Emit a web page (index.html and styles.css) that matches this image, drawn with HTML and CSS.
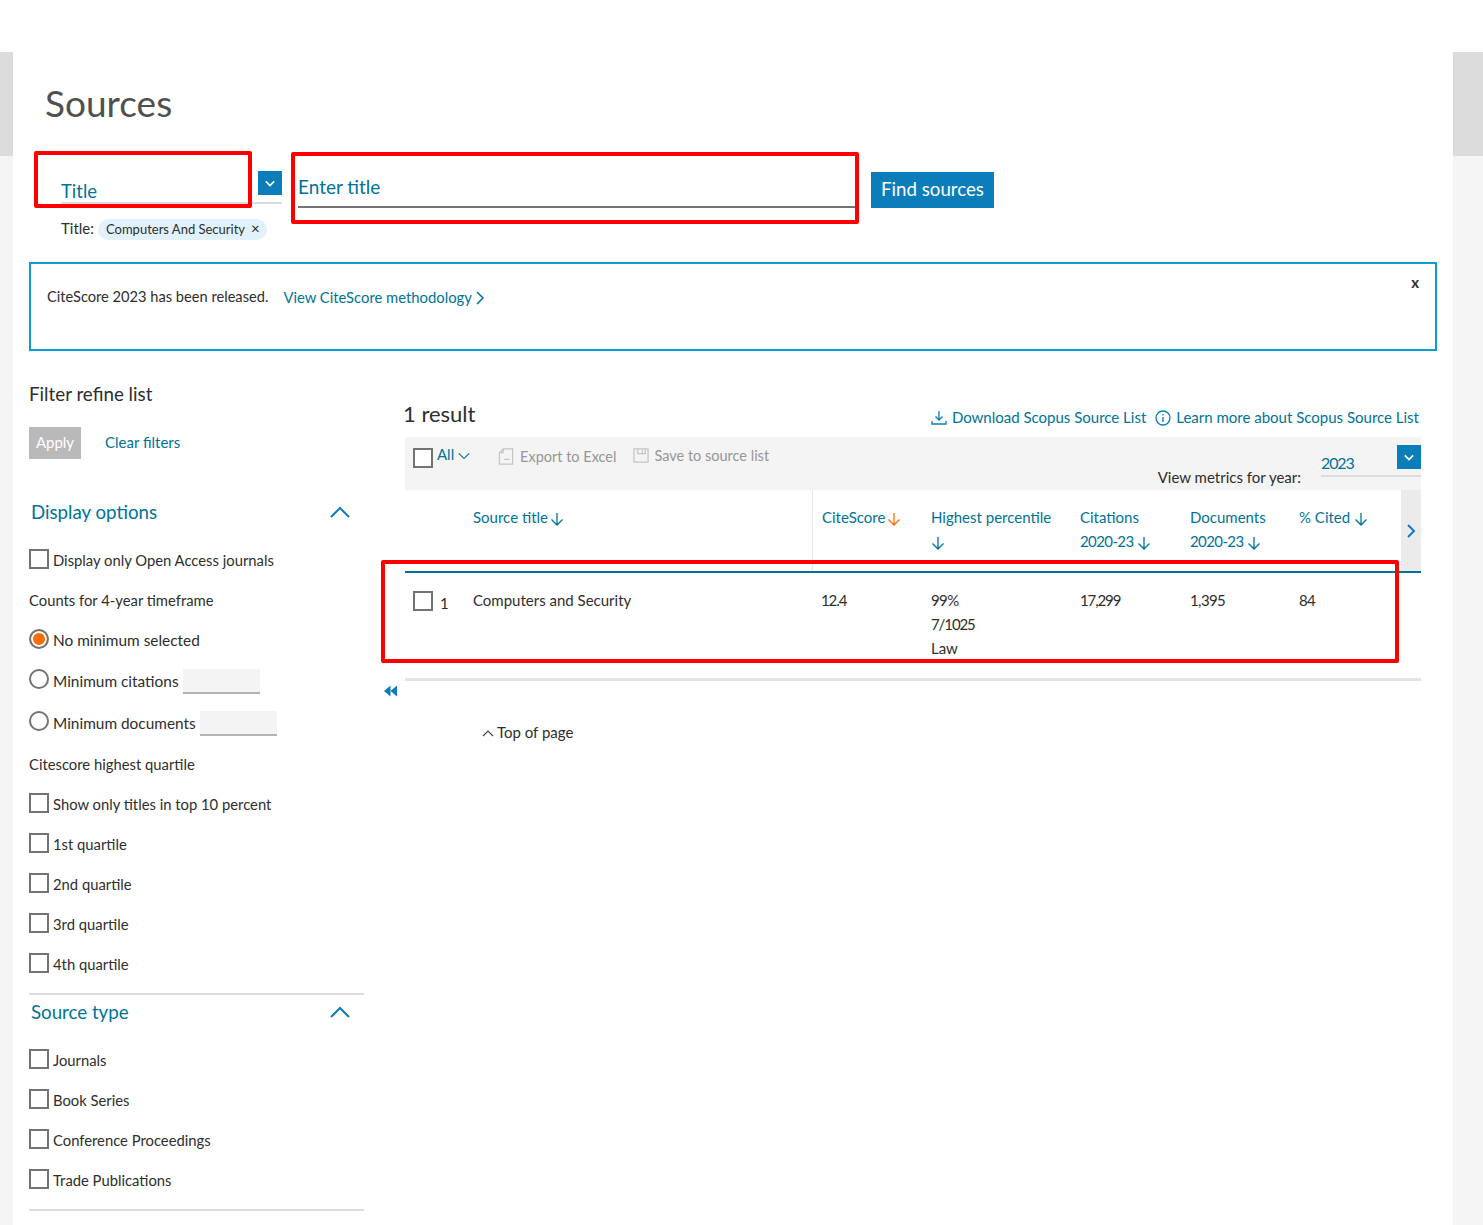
FILE: index.html
```html
<!DOCTYPE html>
<html lang="en">
<head>
  <meta charset="UTF-8" />
  <title>Sources</title>
  <link rel="stylesheet" href="styles.css">
</head>
<body>
  <div class="shell">
    <div class="gutter gutter-left"><div class="gutter-thumb"></div></div>

    <main class="page">
      <h1 class="page-title">Sources</h1>

      <section class="search-row">
        <div class="select-field">
          <span class="select-value">Title</span>
          <button class="select-btn"><svg viewBox="0 0 24 24" class="select-caret"><path d="M7 10l5 5 5-5" /></svg></button>
        </div>
        <div class="title-field">Enter title</div>
        <button class="find-btn">Find sources</button>
      </section>

      <div class="chip-row">
        <span class="chip-label">Title:</span>
        <span class="chip">Computers And Security <span class="chip-x">&times;</span></span>
      </div>

      <div class="banner">
        <span class="banner-text">CiteScore 2023 has been released.</span>
        <a class="link banner-link">View CiteScore methodology <svg viewBox="0 0 10 16" class="banner-caret"><path d="M2 2l6 6-6 6" /></svg></a>
        <span class="banner-close">x</span>
      </div>

      <div class="columns">
        <aside class="filters">
          <h2 class="filters-title">Filter refine list</h2>
          <div class="filter-actions">
            <button class="apply-btn">Apply</button>
            <a class="link">Clear filters</a>
          </div>

          <div class="group-head group-head-first">
            <span>Display options</span>
            <svg viewBox="0 0 20 12" class="group-caret"><path d="M1 11l9-9 9 9" /></svg>
          </div>
          <label class="row"><span class="check"></span>Display only Open Access journals</label>
          <div class="row">Counts for 4-year timeframe</div>
          <label class="row row-wide"><span class="radio radio-on"></span>No minimum selected</label>
          <label class="row row-tall row-wide"><span class="radio"></span>Minimum citations <span class="min-input"></span></label>
          <label class="row row-tall row-wide"><span class="radio"></span>Minimum documents <span class="min-input"></span></label>
          <div class="row">Citescore highest quartile</div>
          <label class="row"><span class="check"></span>Show only titles in top 10 percent</label>
          <label class="row"><span class="check"></span>1st quartile</label>
          <label class="row"><span class="check"></span>2nd quartile</label>
          <label class="row"><span class="check"></span>3rd quartile</label>
          <label class="row"><span class="check"></span>4th quartile</label>

          <div class="group-head group-head-next">
            <span>Source type</span>
            <svg viewBox="0 0 20 12" class="group-caret"><path d="M1 11l9-9 9 9" /></svg>
          </div>
          <label class="row"><span class="check"></span>Journals</label>
          <label class="row"><span class="check"></span>Book Series</label>
          <label class="row"><span class="check"></span>Conference Proceedings</label>
          <label class="row"><span class="check"></span>Trade Publications</label>
          <div class="filters-end"></div>
        </aside>

        <section class="results">
          <div class="results-head">
            <span class="results-count">1 result</span>
            <div class="results-links">
              <a class="link"><svg viewBox="0 0 16 16" class="ico"><path d="M8 1v9M4.500 6.500L8 10l3.500-3.500M1 11v3h14v-3" /></svg>Download Scopus Source List</a>
              <a class="link"><svg viewBox="0 0 16 16" class="ico"><circle cx="8" cy="8" r="7" /><path d="M8 7v5M8 4v1.500" /></svg>Learn more about Scopus Source List</a>
            </div>
          </div>

          <div class="toolbar">
            <span class="check toolbar-check"></span>
            <a class="link toolbar-all">All <svg viewBox="0 0 14 8" class="all-caret"><path d="M1 1l6 6 6-6" /></svg></a>
            <span class="tool tool-excel">
              <svg viewBox="0 0 16 18" class="tool-ico"><path d="M5 1h10v16H1V5zM5 1v4H1" /><path d="M6 12h6" /></svg>Export to Excel
            </span>
            <span class="tool tool-save">
              <svg viewBox="0 0 17 16" class="tool-ico"><path d="M1 1h15v14H1zM5 1v5h8V1M10 2v3" /></svg>Save to source list
            </span>
            <div class="year">
              <span class="year-label">View metrics for year:</span>
              <div class="year-select">
                <span class="year-value num-tight">2023</span>
                <button class="select-btn year-btn"><svg viewBox="0 0 24 24" class="select-caret"><path d="M7 10l5 5 5-5" /></svg></button>
              </div>
            </div>
          </div>

          <div class="table-wrap">
            <div class="table table-head">
              <div></div>
              <div class="th th-source">Source title <svg viewBox="0 0 14 14" class="arrow arrow-near"><path d="M7 1v12M1.500 7.500L7 13l5.500-5.500" /></svg></div>
              <div class="th th-score">CiteScore <svg viewBox="0 0 14 14" class="arrow arrow-near arrow-active"><path d="M7 1v12M1.500 7.500L7 13l5.500-5.500" /></svg></div>
              <div class="th">Highest percentile<br><svg viewBox="0 0 14 14" class="arrow arrow-solo"><path d="M7 1v12M1.500 7.500L7 13l5.500-5.500" /></svg></div>
              <div class="th">Citations<br><span class="num">2020-23</span> <svg viewBox="0 0 14 14" class="arrow"><path d="M7 1v12M1.500 7.500L7 13l5.500-5.500" /></svg></div>
              <div class="th">Documents<br><span class="num">2020-23</span> <svg viewBox="0 0 14 14" class="arrow"><path d="M7 1v12M1.500 7.500L7 13l5.500-5.500" /></svg></div>
              <div class="th">% Cited <svg viewBox="0 0 14 14" class="arrow"><path d="M7 1v12M1.500 7.500L7 13l5.500-5.500" /></svg></div>
              <button class="scroll-btn"><svg viewBox="0 0 10 16" class="scroll-caret"><path d="M2 2l6 6-6 6" /></svg></button>
            </div>

            <div class="table table-row">
              <div class="td-select"><span class="check"></span><span class="row-num">1</span></div>
              <div>Computers and Security</div>
              <div class="td-score num-tight">12.4</div>
              <div><span class="num">99%</span><br><span class="num-tight">7/1025</span><br>Law</div>
              <div class="num-tight">17,299</div>
              <div class="num">1,395</div>
              <div class="num">84</div>
              <div></div>
            </div>
          </div>

          <div class="table-end">
            <svg viewBox="0 0 14 12" class="collapse-ico"><path d="M7 0v12L0 6zM14 0v12L7 6z" /></svg>
          </div>

          <a class="top-link"><svg viewBox="0 0 12 7" class="top-caret"><path d="M1 6l5-5 5 5" /></svg>Top of page</a>
        </section>
      </div>
    </main>

    <div class="gutter gutter-right"><div class="gutter-thumb"></div></div>
  </div>

  <!-- red annotation boxes drawn on top of the screenshot -->
  <div class="mark mark-type"></div>
  <div class="mark mark-title"></div>
  <div class="mark mark-row"></div>
</body>
</html>
```

FILE: styles.css
```css
:root {
  --link: #007398;
  --text: #2e2e2e;
  --muted: #969696;
  --panel: #f4f4f4;
  --blue-btn: #0c7dbb;
  --rule: #dcdcdc;
  --red: #f00;
}

* {
  box-sizing: border-box;
  margin: 0;
  padding: 0;
}

html, body {
  height: 100%;
  overflow: hidden;
}

body {
  background: #fff;
  color: var(--text);
  font-family: Lato, "Liberation Sans", sans-serif;
  font-size: 15px;
  position: relative;
}

.shell {
  display: flex;
  padding-top: 52px;
  height: 100%;
}

/* Scroll gutters */
.gutter {
  flex: none;
  background: #f5f5f5;
}
.gutter-left { width: 13px; }
.gutter-right { width: 30px; }
.gutter-thumb {
  height: 104px;
  background: #dcdcdc;
}

.page {
  flex: 1 1 auto;
  min-width: 0;
  padding: 0 16px;
}

.page-title {
  font-size: 37px;
  font-weight: 400;
  line-height: 46px;
  color: #505050;
  margin: 28px 0 0 16px;
}

.link {
  color: var(--link);
  text-decoration: none;
}

.num { letter-spacing: -.6px; }
.num-tight { letter-spacing: -1.100px; }

/* Search row */
.search-row {
  display: flex;
  align-items: flex-start;
  height: 62px;
  padding-left: 32px;
  margin-top: 20px;
}

.select-field {
  position: relative;
  width: 221px;
  height: 58px;
  border-bottom: 2px solid var(--rule);
  display: flex;
  align-items: flex-end;
  flex: none;
}
.select-value {
  font-size: 18.500px;
  color: var(--link);
  line-height: 24px;
  margin-bottom: -1px;
}
.select-btn {
  border: none;
  background: var(--blue-btn);
  width: 24px;
  height: 24px;
  display: flex;
  align-items: center;
  justify-content: center;
}
.select-field .select-btn {
  position: absolute;
  right: 0;
  top: 25px;
}
.select-caret {
  width: 20px;
  height: 20px;
  fill: none;
  stroke: #fff;
  stroke-width: 2;
}

.title-field {
  width: 557px;
  height: 63px;
  margin-left: 16px;
  padding: 29px 0 0;
  font-size: 19px;
  line-height: 26px;
  color: var(--link);
  border-bottom: 2px solid #737373;
  flex: none;
  margin-top: -1px;
}

.find-btn {
  border: none;
  background: var(--blue-btn);
  color: #fff;
  font-family: inherit;
  font-size: 18.700px;
  width: 123px;
  height: 36px;
  padding-bottom: 2px;
  margin: 26px 0 0 16px;
  flex: none;
}

.chip-row {
  display: flex;
  align-items: center;
  height: 21px;
  margin: 11px 0 0 31px;
  gap: 4px;
}
.chip-label { margin: -4px 0 0 1px; }
.chip {
  display: inline-block;
  background: #e1f2fd;
  height: 21px;
  line-height: 18px;
  border-radius: 11px;
  padding: 0 7px 0 8px;
  font-size: 13px;
  white-space: nowrap;
}
.chip-x {
  margin-left: 3px;
  font-size: 15px;
}

/* Banner */
.banner {
  position: relative;
  margin-top: 22px;
  height: 89px;
  width: 1408px;
  border: 2px solid #0a9fd0;
  padding: 24px 16px 0;
  display: flex;
  align-items: flex-start;
  gap: 15px;
}
.banner-text { font-size: 14.650px; }
.banner-link { font-size: 14.800px; }
.banner-caret {
  width: 10px;
  height: 16px;
  fill: none;
  stroke: var(--link);
  stroke-width: 1.500;
  vertical-align: -3px;
}
.banner-close {
  position: absolute;
  right: 16px;
  top: 9px;
  font-weight: 700;
  font-size: 15px;
}

.columns {
  display: flex;
  align-items: flex-start;
}

/* Left filter list */
.filters {
  width: 335px;
  flex: none;
  padding-top: 31px;
  font-size: 14.800px;
}
.filters-title {
  font-size: 18.800px;
  font-weight: 400;
  line-height: 24px;
}
.filter-actions {
  display: flex;
  align-items: center;
  gap: 24px;
  margin-top: 21px;
  font-size: 15px;
}
.filter-actions .link { margin-top: -2px; }
.apply-btn {
  border: none;
  background: #b9b9b9;
  color: #fff;
  font-family: inherit;
  font-size: 15px;
  width: 52px;
  height: 32px;
  padding-bottom: 2px;
}

.group-head {
  display: flex;
  align-items: center;
  justify-content: space-between;
  font-size: 18.700px;
  line-height: 24px;
  color: var(--link);
  padding: 0 14px 0 2px;
}
.group-head-first { margin-top: 41px; margin-bottom: 16px; }
.group-head-next {
  border-top: 2px solid var(--rule);
  margin-top: 9px;
  padding-top: 5px;
  margin-bottom: 16px;
}
.group-caret {
  width: 20px;
  height: 12px;
  fill: none;
  stroke: #0c7dbb;
  stroke-width: 2;
}

.row {
  display: flex;
  align-items: center;
  height: 40px;
  gap: 4px;
  white-space: nowrap;
}
.row-wide { font-size: 15.400px; }
.row-tall { height: 42px; }
.row .check, .row .radio { margin-top: -2px; }
.row-tall .radio { margin-top: -4px; }

.check {
  display: inline-block;
  width: 20px;
  height: 20px;
  border: 2px solid #737373;
  background: #fff;
  flex: none;
}
.radio {
  display: inline-block;
  width: 20px;
  height: 20px;
  border: 2px solid #737373;
  border-radius: 50%;
  background: #fff;
  flex: none;
}
.radio-on {
  background: #ff6c00;
  box-shadow: inset 0 0 0 2px #fff;
}
.min-input {
  display: inline-block;
  width: 77px;
  height: 25px;
  background: var(--panel);
  border-bottom: 2px solid #b4b4b4;
}
.filters-end {
  border-top: 2px solid var(--rule);
  margin-top: 9px;
}

/* Results */
.results {
  width: 1016px;
  flex: none;
  margin-left: 41px;
  padding-top: 50px;
}
.results-head {
  display: flex;
  justify-content: space-between;
  align-items: flex-end;
  height: 36px;
  padding-right: 2px;
}
.results-count {
  font-size: 22px;
  line-height: 26px;
  margin-left: -2px;
  margin-bottom: 10px;
}
.results-links {
  display: flex;
  gap: 9px;
  margin-bottom: 11px;
}
.ico {
  width: 16px;
  height: 16px;
  margin-right: 5px;
  fill: none;
  stroke: var(--blue-btn);
  stroke-width: 1.300;
  vertical-align: -3px;
}

.toolbar {
  position: relative;
  display: flex;
  align-items: flex-start;
  height: 53px;
  background: var(--panel);
  padding: 10px 0 0 8px;
}
.toolbar-check { margin-top: 1px; }
.toolbar-all { margin: -2px 0 0 4px; line-height: 18px; }
.all-caret {
  width: 12px;
  height: 8px;
  fill: none;
  stroke: var(--link);
  stroke-width: 1.300;
}
.tool {
  color: var(--muted);
  margin-left: 18px;
  line-height: 20px;
  font-size: 14.500px;
}
.tool-excel { margin-left: 28px; }
.tool-save { margin: -1px 0 0 17px; }
.tool-save .tool-ico { margin-right: 5px; }
.tool-ico {
  width: 16px;
  height: 17px;
  margin-right: 6px;
  fill: none;
  stroke: #c4c4c4;
  stroke-width: 1.300;
  vertical-align: -3px;
}

.year {
  margin-left: auto;
  display: flex;
  align-items: flex-start;
  gap: 20px;
}
.year-label { margin-top: 21px; line-height: 18px; }
.year-select {
  position: relative;
  width: 100px;
  height: 32px;
  margin-top: -2px;
  border-bottom: 2px solid var(--rule);
  color: var(--link);
  font-size: 16px;
  line-height: 20px;
  padding-top: 8px;
}
.year-btn {
  position: absolute;
  top: 0;
  right: 0;
}

/* Table */
.table {
  display: grid;
  grid-template-columns: 68px 340px 118px 149px 110px 109px 102px 20px;
}
.table-head {
  height: 83px;
  border-bottom: 2px solid #00729a;
  line-height: 24px;
}
.th {
  color: var(--link);
  padding-top: 15px;
}
.th-source {
  border-right: 1px solid #e6e6e6;
}
.th-score { padding-left: 9px; }
.arrow {
  width: 14px;
  height: 14px;
  fill: none;
  stroke: var(--link);
  stroke-width: 1.300;
  vertical-align: -3px;
}
.arrow-near { margin-left: -2px; }
.arrow-active { stroke: #ff6c00; }
.scroll-btn {
  border: none;
  background: #ebebeb;
  display: flex;
  align-items: center;
  justify-content: center;
}
.scroll-caret {
  width: 10px;
  height: 16px;
  fill: none;
  stroke: var(--blue-btn);
  stroke-width: 2;
}

.table-row {
  height: 105px;
  line-height: 24px;
  padding-top: 15px;
}
.td-select {
  display: flex;
  align-items: flex-start;
  padding: 3px 0 0 8px;
  gap: 7px;
}
.row-num { line-height: 24px; }
.td-score { padding-left: 8px; }

.table-end {
  position: relative;
  border-top: 3px solid #e3e3e3;
}
.collapse-ico {
  position: absolute;
  left: -21px;
  top: 4px;
  width: 13px;
  height: 12px;
  fill: var(--blue-btn);
}

.top-link {
  display: block;
  margin: 39px 0 0 77px;
  line-height: 24px;
}
.top-caret {
  width: 12px;
  height: 7px;
  margin-right: 3px;
  fill: none;
  stroke: #444;
  stroke-width: 1.200;
  vertical-align: 1px;
}

/* Red annotation boxes */
.mark {
  position: absolute;
  border: 4px solid var(--red);
  border-radius: 2px;
}
.mark-type { left: 34px; top: 151px; width: 218px; height: 57px; }
.mark-title { left: 291px; top: 152px; width: 568px; height: 72px; }
.mark-row { left: 381px; top: 560px; width: 1018px; height: 103px; }
```
